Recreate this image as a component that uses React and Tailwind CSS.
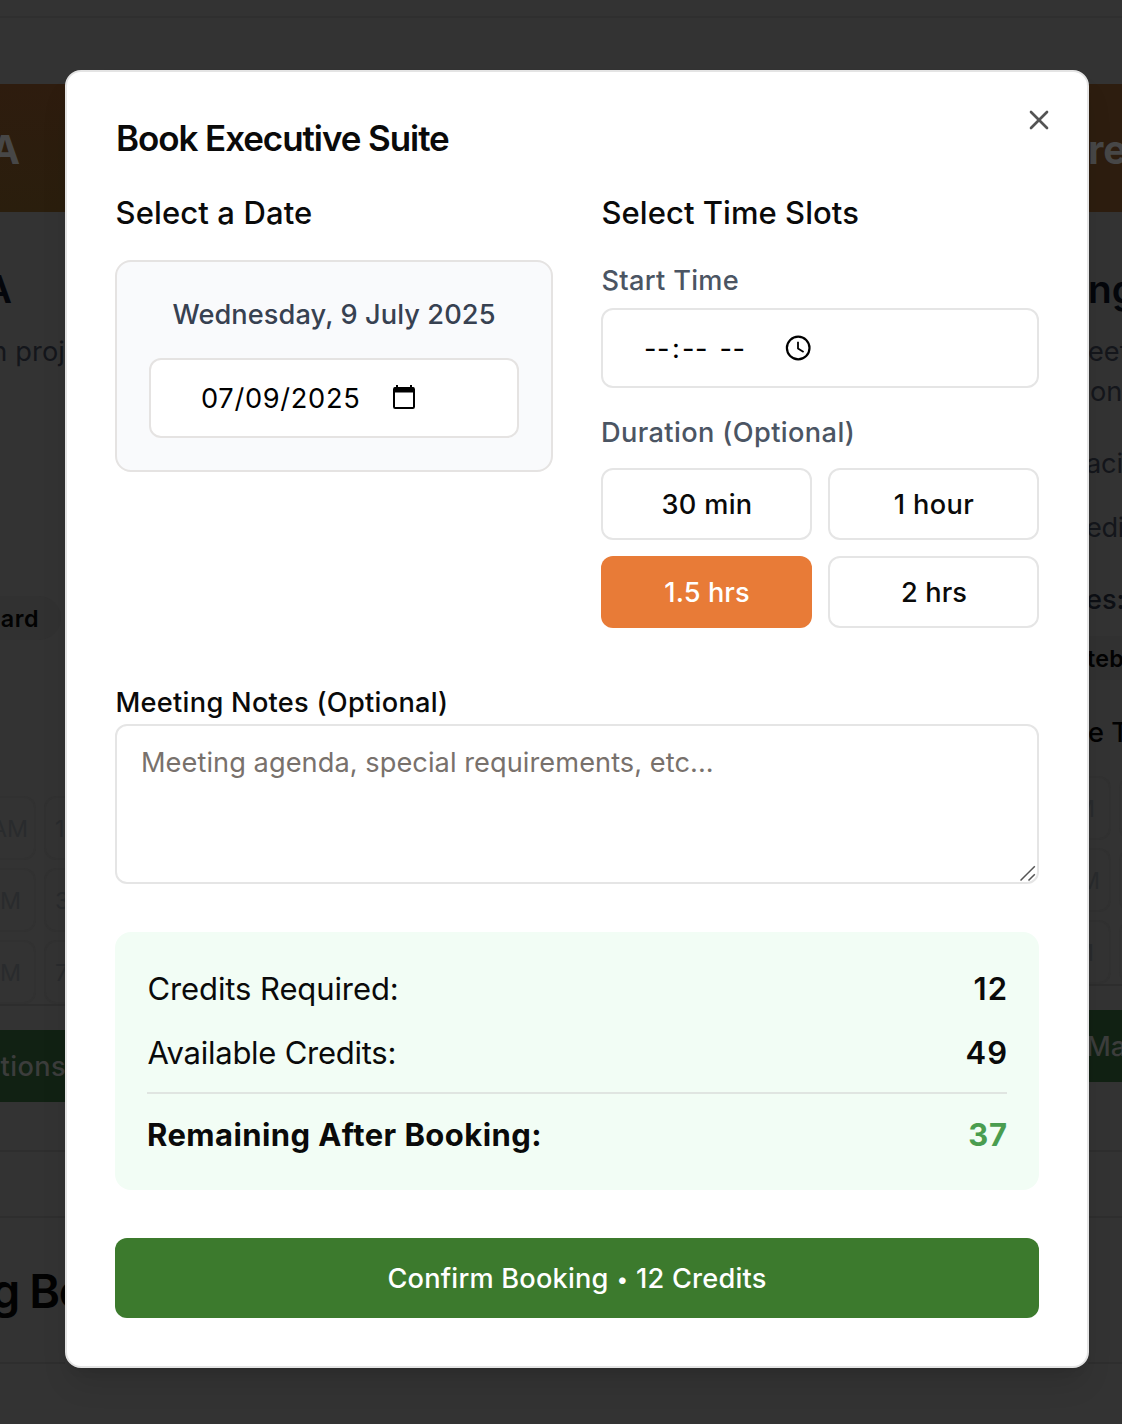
import React from "react";
import { X } from "lucide-react";

const slotClass = "flex h-16 shrink-0 items-center rounded-xl border-2 border-[#313131] pt-[2px] text-[23.3px] text-[#292b2d]";

function LeftPage() {
  return (
    <div className="flex w-[65px] flex-col overflow-hidden whitespace-nowrap">
      <div className="mt-[66px] flex h-32 shrink-0 items-center justify-end bg-linear-to-b from-[#2e1c0e] to-[#2a1e0d] pt-[3px] pr-[45px] text-[40px] font-bold text-[#474747]">A</div>
      <div className="mt-[53px] flex h-12 shrink-0 items-center justify-end pr-[53px] text-[38.8px] font-semibold text-[#04060b]">A</div>
      <div className="mt-[18px] flex h-10 shrink-0 items-center justify-end pt-[3px] text-[27.2px] tracking-[0.1px] text-[#14161b]">n proj</div>
      <div className="mt-[225px] mr-1 flex h-11 shrink-0 items-center justify-end rounded-r-full bg-[#313131] pt-[2px] pr-[22px] text-[23.3px] font-semibold tracking-[0.5px] text-[#020202]">ard</div>
      <div className="mt-[156px] flex flex-col gap-2">
        {[["AM", "1", "pr-[6px]"], ["M", "3", "pr-[13px]"], ["M", "7", "pr-[13px]"]].map(([a, b, pad]) => (
          <div key={b} className="flex gap-2">
            <div className={`${slotClass} w-9 justify-end rounded-l-none border-l-0 ${pad}`}>{a}</div>
            <div className={`${slotClass} w-20 pl-[9px]`}>{b}</div>
          </div>
        ))}
      </div>
      <div className="h-0.5 shrink-0 bg-[#2d2d2d]" />
      <div className="mt-6 flex h-[72px] shrink-0 items-center justify-end bg-[#112113] pt-[2px] text-[27.2px] font-medium tracking-[0.4px] text-[#3c3d3c]"><span className="-mr-px">otions</span></div>
      <div className="mt-12 h-0.5 shrink-0 bg-[#2e2e2e]" />
      <div className="mt-16 h-0.5 shrink-0 bg-[#2e2e2e]" />
      <div className="mt-[43px] -ml-[9px] flex h-[60px] shrink-0 items-center text-[46.8px] font-semibold tracking-[-1.4px] text-[#020202]">g Bo</div>
      <div className="mt-[41px] h-0.5 shrink-0 bg-[#2e2e2e]" />
    </div>
  );
}

function RightPage() {
  const line = "flex h-10 shrink-0 items-center pt-[3px] text-[27.2px]";
  return (
    <div className="flex w-[34px] flex-col overflow-hidden whitespace-nowrap">
      <div className="mt-[66px] flex h-32 shrink-0 items-center bg-[#2d1d0f] pt-[3px] text-[40px] font-bold text-[#474747]">re</div>
      <div className="mt-[53px] flex h-12 shrink-0 items-center text-[38.8px] font-semibold text-[#04060b]">ng</div>
      <div className={`${line} mt-[18px] text-[#14161b]`}>eet</div>
      <div className={`${line} pl-0.5 text-[#14161b]`}>on</div>
      <div className={`${line} mt-8 -ml-[2px] tracking-[-0.2px] text-[#14161b]`}>aci</div>
      <div className={`${line} mt-6 -ml-[2px] tracking-[-0.4px] text-[#14161b]`}>edi</div>
      <div className={`${line} mt-8 -ml-[2px] font-medium text-[#0d0f14]`}>es:</div>
      <div className="mt-[17px] -ml-px flex h-11 shrink-0 items-center bg-[#313131] pt-[2px] text-[23.3px] font-semibold tracking-[0.3px] text-[#020202]">teb</div>
      <div className={`${line} mt-8 font-medium text-[#020202]`}>e T</div>
      <div className="mt-6 flex flex-col gap-2">
        {["-ml-[14px]", "-ml-[9px]", "-ml-[15px]"].map((shift, i) => (
          <div key={i} className="flex gap-2">
            <div className={`${slotClass} w-[23px] rounded-l-none border-l-0`}><span className={shift}>M</span></div>
            <div className={`${slotClass} w-10`} />
          </div>
        ))}
      </div>
      <div className="h-0.5 shrink-0 bg-[#2d2d2d]" />
      <div className="mt-6 -ml-0.5 flex h-[72px] shrink-0 items-center bg-[#112113] pt-[2px] text-[27.2px] font-medium text-[#3c3d3c]">Ma</div>
      <div className="mt-[68px] h-0.5 shrink-0 bg-[#2e2e2e]" />
      <div className="mt-16 h-0.5 shrink-0 bg-[#2e2e2e]" />
      <div className="mt-[144px] h-0.5 shrink-0 bg-[#2e2e2e]" />
    </div>
  );
}

function CalendarIcon() {
  return (
    <svg className="mb-[2px] h-6 w-[22px]" viewBox="0 0 22 24" fill="none">
      <path d="M4 0v4M18 0v4" stroke="black" strokeWidth="2" />
      <rect x="1" y="3" width="20" height="20" rx="1.2" stroke="black" strokeWidth="2" />
      <path d="M1 2.5h20v5H1z" fill="black" />
    </svg>
  );
}

function ClockIcon() {
  return (
    <svg className="mb-px size-[26px]" viewBox="0 0 26 26" fill="none" stroke="black">
      <circle cx="13.2" cy="13" r="11.3" strokeWidth="2.2" />
      <path d="M13 6.8v6.8l5.6 3.4" strokeWidth="1.8" />
    </svg>
  );
}

function SummaryRow({ label, track, value }) {
  return (
    <div className="flex h-12 items-center justify-between pt-[2px] text-[31px]">
      <span className={`pl-[0.5px] ${track}`}>{label}</span>
      <span className="-mr-px font-semibold tracking-[1px]">{value}</span>
    </div>
  );
}

const durations = [
  { text: "30 min", track: "tracking-[0.3px]" },
  { text: "1 hour", track: "tracking-[0.4px]" },
  { text: "1.5 hrs", track: "tracking-[0.1px]", active: true },
  { text: "2 hrs", track: "tracking-[0.1px]" },
];

export default function App() {
  return (
    <div className="relative flex h-[1424px] w-[1122px] flex-col overflow-hidden bg-[#333333] font-['Inter',sans-serif] text-[#0a0a0a]">
      <header className="h-[18px] shrink-0 border-b-2 border-[#2f2f2f]" />
      <div className="flex min-h-0 flex-1 justify-between">
        <LeftPage />
        <RightPage />
      </div>
      <div role="dialog" className="absolute top-[70px] left-[65px] flex h-[1298px] w-[1024px] flex-col whitespace-nowrap rounded-2xl border-2 border-[#e4e4e4] bg-white p-12 shadow-[0_20px_30px_-6px_rgba(0,0,0,0.12),0_8px_12px_-8px_rgba(0,0,0,0.12)]">
        <button aria-label="Close" className="absolute top-8 right-8 text-[#545454]"><X size={32} strokeWidth={2} /></button>
        <h2 className="h-9 pl-px text-[35px] leading-9 font-semibold tracking-[-1.08px]">Book Executive Suite</h2>

        <div className="mt-8 grid grid-cols-2 gap-12">
          <section>
            <h3 className="h-12 pt-px pl-[0.5px] text-[31px] leading-[48px] font-medium tracking-[0.12px]">Select a Date</h3>
            <div className="mt-6 rounded-2xl border-2 border-[#e5e3e2] bg-[#f9fafc] p-8">
              <p className="h-10 pt-px text-center text-[27.2px] leading-10 font-medium tracking-[0.08px] text-[#374151]">Wednesday, 9 July 2025</p>
              <div className="mt-6 flex h-20 items-center rounded-xl border-2 border-[#e5e3e2] bg-white pl-[50px] text-[27.2px] text-black">
                <span className="w-[192px] pt-[2px] tracking-[0.7px]">07/09/2025</span>
                <CalendarIcon />
              </div>
            </div>
          </section>
          <section>
            <h3 className="h-12 pt-px pl-[0.5px] text-[31px] leading-[48px] font-medium tracking-[0.05px]">Select Time Slots</h3>
            <p className="mt-6 h-10 pt-px pl-[0.5px] text-[27.2px] leading-10 font-medium tracking-[0.3px] text-[#4b5563]">Start Time</p>
            <div className="mt-2 flex h-20 items-center rounded-xl border-2 border-[#e5e5e5] pl-[41px] text-[27.2px] text-black">
              <span className="w-[26px] pt-[2px] tracking-[0.5px]">--</span>
              <span className="w-3 pt-[2px] text-center">:</span>
              <span className="w-[37.5px] pt-[2px] tracking-[0.5px]">--</span>
              <span className="w-[65.5px] pt-[2px] tracking-[0.5px]">--</span>
              <ClockIcon />
            </div>
            <p className="mt-6 h-10 pt-px text-[27.2px] leading-10 font-medium tracking-[0.38px] text-[#4b5563]">Duration (Optional)</p>
            <div className="mt-4 grid grid-cols-2 gap-4">
              {durations.map((d) => (
                <button
                  key={d.text}
                  className={`flex h-[72px] items-center justify-center rounded-xl pt-[2px] pl-px text-[27.2px] font-medium ${d.track} ${d.active ? "bg-[#e87b37] text-white" : "border-2 border-[#e5e5e5]"}`}
                >
                  {d.text}
                </button>
              ))}
            </div>
          </section>
        </div>

        <label className="mt-[55px] h-[41px] pl-[0.5px] text-[27.2px] leading-10 font-medium tracking-[0.28px]">Meeting Notes (Optional)</label>
        <div className="relative h-40 shrink-0 rounded-xl border-2 border-[#e5e5e5] px-6 pt-[17px] text-[27.2px] leading-10 tracking-[0.06px] text-[#78716c]">
          Meeting agenda, special requirements, etc...
          <svg className="absolute right-px bottom-px size-4" viewBox="0 0 16 16" stroke="#555555" strokeWidth="1.5">
            <path d="M0.5 15.5 14.8 1.2M8.5 15.5 14.8 9.2" />
          </svg>
        </div>

        <div className="mt-12 flex flex-col gap-4 rounded-2xl bg-[#f2fdf5] p-8">
          <SummaryRow label="Credits Required:" track="tracking-[-0.1px]" value="12" />
          <SummaryRow label="Available Credits:" track="tracking-[-0.25px]" value="49" />
          <div className="flex h-[66px] items-center justify-between border-t-2 border-[#e0e5e1] pt-[18px] text-[31px] font-bold">
            <span className="tracking-[0.43px]">Remaining After Booking:</span>
            <span className="-mr-px tracking-[0.9px] text-[#4a9d4f]">37</span>
          </div>
        </div>

        <button className="mt-12 h-20 rounded-xl bg-[#3c7a2d] pt-[2px] text-[27.2px] font-medium tracking-[0.2px] text-white">
          Confirm Booking <span className="inline-block w-[12.5px] text-center align-[1px] text-[21px] leading-none">•</span> 12 Credits
        </button>
      </div>
    </div>
  );
}
